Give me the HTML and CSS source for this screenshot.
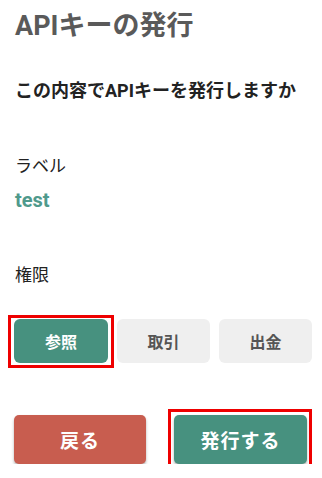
FILE: index.html
```html
<!DOCTYPE html>
<html lang="ja">
<head>
<meta charset="utf-8">
<link rel="stylesheet" href="styles.css">
</head>
<body>
<main class="page">
  <h1 class="title">APIキーの発行</h1>
  <p class="confirm">この内容でAPIキーを発行しますか</p>
  <div class="field-label label-first">ラベル</div>
  <div class="field-value">test</div>
  <div class="field-label label-perm">権限</div>
  <div class="perms">
    <div class="mark mark-sm"><button class="perm perm-on">参照</button></div>
    <button class="perm">取引</button>
    <button class="perm">出金</button>
  </div>
  <div class="actions">
    <button class="act act-back">戻る</button>
    <div class="mark mark-lg"><button class="act act-issue">発行する</button></div>
  </div>
</main>
</body>
</html>
```
FILE: styles.css
```css
* { box-sizing: border-box; }
html, body { margin: 0; padding: 0; background: #fff; }
body {
  font-family: Roboto, "Noto Sans CJK JP", sans-serif;
  color: #222;
}
.page {
  padding: 0 10px 0 14px;
  display: flex;
  flex-direction: column;
}
.title {
  margin: 10px 0 0 1px;
  font-size: 27px;
  line-height: 32px;
  font-weight: 700;
  color: #5a5a5a;
}
.confirm {
  margin: 37px 0 0 1px;
  font-size: 18px;
  line-height: 24px;
  font-weight: 700;
  color: #222;
}
.field-label {
  font-size: 17px;
  line-height: 24px;
  color: #222;
  margin-left: 1px;
}
.label-first { margin-top: 51px; }
.label-perm { margin-top: 50px; }
.field-value {
  margin: 9px 0 0 1px;
  font-size: 20px;
  line-height: 26px;
  font-weight: 700;
  color: #4f9a8c;
}
.perms {
  margin-top: 32px;
  display: flex;
  align-items: flex-start;
  gap: 9px;
}
.perm {
  display: block;
  width: 94px;
  height: 44px;
  border: none;
  border-radius: 6px;
  background: #efefef;
  color: #555;
  font-family: inherit;
  font-size: 16px;
  font-weight: 700;
  padding: 0;
}
.perm-on {
  background: #47917f;
  color: #fff;
}
.mark {
  position: relative;
  flex: none;
}
.mark::after {
  content: "";
  position: absolute;
  border: 3px solid #ee0000;
  pointer-events: none;
  z-index: 2;
}
.mark-sm::after {
  top: -4px; left: -6px; right: -6px; bottom: -5px;
}
.mark-lg::after {
  top: -6px; left: -6px; right: -5px; bottom: -5px;
}
.actions {
  margin-top: 52px;
  display: flex;
  align-items: flex-start;
  gap: 28px;
}
.act {
  display: block;
  width: 132px;
  height: 49px;
  border: none;
  border-radius: 5px;
  color: #fff;
  font-family: inherit;
  font-size: 19px;
  font-weight: 700;
  letter-spacing: 1px;
  padding: 0;
  box-shadow: 0 2px 3px rgba(0, 0, 0, 0.3);
}
.act-back { background: #c85d4f; }
.act-issue { background: #47917f; width: 133px; }
```
